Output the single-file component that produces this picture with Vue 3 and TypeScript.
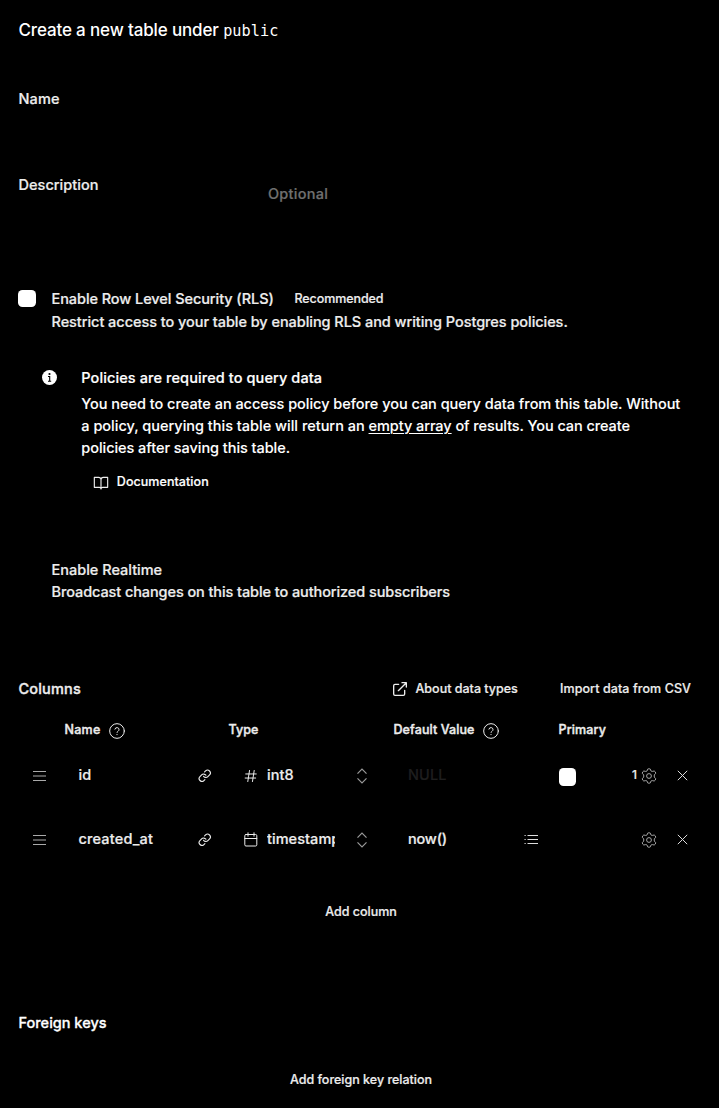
<script setup lang="ts">
import { ref } from 'vue'

interface ColumnRow {
  name: string
  kind: 'number' | 'date'
  type: string
  value: string
  suggestions: boolean
  primary: boolean
  count: string
}

const columns = ref<ColumnRow[]>([
  { name: 'id', kind: 'number', type: 'int8', value: '', suggestions: false, primary: true, count: '1' },
  { name: 'created_at', kind: 'date', type: 'timestamptz', value: 'now()', suggestions: true, primary: false, count: '' },
])
</script>

<template>
  <main class="panel">
    <h1 class="title"><span>Create a new table under</span><code>public</code></h1>

    <section class="field name-field"><label>Name</label></section>
    <section class="field desc-field">
      <label>Description</label>
      <span class="placeholder">Optional</span>
    </section>

    <section class="option rls">
      <span class="check"></span>
      <div class="option-body">
        <div class="option-head"><span class="rls-label">Enable Row Level Security (RLS)</span><span class="tag">Recommended</span></div>
        <p class="rls-text">Restrict access to your table by enabling RLS and writing Postgres policies.</p>
      </div>
    </section>

    <section class="notice">
      <svg class="info" viewBox="0 0 15 15" width="15" height="15"><circle cx="7.5" cy="7.5" r="7.5" fill="#fff" /><circle cx="7.5" cy="4" r="1.1" fill="#000" /><path d="M6 6.500h1.700v4.800M6 11.300h3.200" fill="none" stroke="#000" stroke-width="1.100" /></svg>
      <div>
        <h2>Policies are required to query data</h2>
        <p><span class="n1">You need to create an access policy before you can query data from this table. Without</span><br><span class="n2">a policy, querying this table will return an </span><u>empty array</u><span class="n3"> of results. You can create</span><br><span class="n4">policies after saving this table.</span></p>
        <div class="docs">
          <svg class="ic" viewBox="0 0 24 24" width="16" height="16" stroke-width="1.7"><path d="M2 3.500h6.500a3.500 3.500 0 0 1 3.500 3.500v14a2.500 2.500 0 0 0-2.500-2.500H2zM22 3.500h-6.500a3.500 3.500 0 0 0-3.500 3.500v14a2.500 2.500 0 0 1 2.500-2.500h7.500z" /></svg>
          <span>Documentation</span>
        </div>
      </div>
    </section>

    <section class="realtime">
      <div>Enable Realtime</div>
      <p>Broadcast changes on this table to authorized subscribers</p>
    </section>

    <header class="columns-head">
      <h2>Columns</h2>
      <svg class="ic" viewBox="0 0 24 24" width="16" height="16" stroke-width="2"><path d="M10 5H4.500a2 2 0 0 0-2 2v12.500a2 2 0 0 0 2 2H17a2 2 0 0 0 2-2V14M15 2.500h6.500v6.500M9.500 14.500 21.500 2.500" /></svg>
      <span class="about">About data types</span>
      <span class="import">Import data from CSV</span>
    </header>

    <div class="labels">
      <span class="l-name">Name</span>
      <svg class="ic help h1" viewBox="0 0 24 24" width="16" height="16" stroke-width="1.5"><circle cx="12" cy="12" r="11" /><path d="M8.900 9.200a3.100 3.100 0 0 1 6.100.9c0 2-3 2.700-3 3.900M12 17.200v.3" /></svg>
      <span class="l-type">Type</span>
      <span class="l-def">Default Value</span>
      <svg class="ic help h2" viewBox="0 0 24 24" width="16" height="16" stroke-width="1.5"><circle cx="12" cy="12" r="11" /><path d="M8.900 9.200a3.100 3.100 0 0 1 6.100.9c0 2-3 2.700-3 3.900M12 17.200v.3" /></svg>
      <span class="l-pri">Primary</span>
    </div>

    <div v-for="c in columns" :key="c.name" class="row">
      <svg class="handle" viewBox="0 0 13 12" width="13" height="12"><path d="M0 1.500h13M0 6h13M0 10.500h13" fill="none" stroke="#aaa" stroke-width="1" /></svg>
      <span class="c-name" :class="c.kind">{{ c.name }}</span>
      <svg class="ic" viewBox="0 0 24 24" width="13.500" height="13.500" stroke-width="2"><path d="M10 13a5 5 0 0 0 7.540.540l3-3a5 5 0 0 0-7.070-7.070l-1.720 1.710M14 11a5 5 0 0 0-7.540-.540l-3 3a5 5 0 0 0 7.070 7.070l1.710-1.710" /></svg>
      <span class="kind">
        <svg v-if="c.kind === 'number'" class="ic" viewBox="0 0 24 24" width="14" height="14" stroke-width="1.700"><path d="M3 8.500h18M2 15.500h18M9.500 2.500l-3 19M17.500 2.500l-3 19" /></svg>
        <svg v-else class="ic" viewBox="0 0 14 15" width="14" height="15" stroke-width="1"><rect x=".8" y="2.500" width="12" height="11.500" rx="1.200" /><path d="M.8 6.500h12M4 .8v3.400M10 .8v3.400" /></svg>
      </span>
      <span class="c-type" :class="c.kind">{{ c.type }}</span>
      <svg class="chev" viewBox="0 0 12 16" width="12" height="16"><path d="M1.500 5.700 6 1.200l4.500 4.500M1.500 10.300 6 14.800l4.500-4.500" fill="none" stroke="#999" stroke-width="1.200" /></svg>
      <span class="c-val" :class="{ empty: !c.value }">{{ c.value || 'NULL' }}</span>
      <span class="sugg"><svg v-if="c.suggestions" viewBox="0 0 14 11" width="14" height="11"><path d="M3.500 1.500H14M3.500 5.500H14M3.500 9.500H14M.5 1.500h1.200M.5 5.500h1.200M.5 9.500h1.200" fill="none" stroke="#ddd" stroke-width="1" /></svg></span>
      <span class="pri"><i v-if="c.primary" class="check small"></i></span>
      <span class="count">{{ c.count }}</span>
      <svg class="gear" viewBox="0 0 16 16" width="16" height="16"><path d="M6.600 1.200Q8 .2 9.400 1.200L10 3Q10.600 3.500 11.300 3.400L13.200 3Q14.800 3.800 14.700 5.300L13.400 6.800Q13 8 13.400 9.200L14.700 10.700Q14.800 12.200 13.200 13L11.300 12.600Q10.600 12.500 10 13L9.400 14.800Q8 15.800 6.600 14.800L6 13Q5.400 12.500 4.700 12.600L2.800 13Q1.200 12.200 1.300 10.700L2.600 9.200Q3 8 2.600 6.800L1.300 5.300Q1.200 3.800 2.800 3L4.700 3.400Q5.400 3.500 6 3Z" /><circle cx="8" cy="8" r="2.400" /></svg>
      <svg class="close" viewBox="0 0 11 11" width="11" height="11"><path d="M.8.8l9.400 9.400M10.200.8L.8 10.200" fill="none" stroke="#ddd" stroke-width="1" /></svg>
    </div>

    <div class="add add-col">Add column</div>
    <h2 class="fk">Foreign keys</h2>
    <div class="add add-fk">Add foreign key relation</div>
  </main>
</template>

<style>
body { background: #000; }
</style>

<style scoped>
.panel { box-sizing: border-box; width: 719px; height: 1108px; overflow: hidden; padding-top: 18px; background: #000; color: #ededed; font: 500 14.5px/22px Inter, "Liberation Sans", sans-serif; -webkit-text-stroke: .2px currentColor; }
h1, h2, p { margin: 0; font: inherit; }
svg { display: block; flex: none; }
span { white-space: pre; }
.ic { fill: none; stroke: #ededed; stroke-linecap: round; stroke-linejoin: round; }

.title { display: flex; align-items: baseline; height: 24px; padding-left: 18.500px; font-size: 17px; line-height: 24px; letter-spacing: -.15px; color: #fff; -webkit-text-stroke: 0; }
.title code { margin-left: 4.500px; font: 15.2px/24px "DejaVu Sans Mono", monospace; letter-spacing: .05px; }

.field { display: flex; padding-left: 18.500px; }
.name-field { margin-top: 46px; height: 22px; }
.desc-field { margin-top: 64px; height: 32px; }
.field label { width: 249.500px; letter-spacing: .03px; }
.name-field label { letter-spacing: .15px; }
.placeholder { padding-top: 9px; color: #707070; letter-spacing: .25px; }

.option { display: flex; margin-top: 82px; padding-left: 18px; }
.check { display: block; flex: none; width: 18px; height: 17px; margin-top: 2px; border-radius: 4.500px; background: #fff; }
.option-body { margin-left: 15.500px; }
.option-head { display: flex; height: 23px; }
.rls-label { width: 243px; letter-spacing: -.07px; }
.tag { font-size: 12.5px; letter-spacing: -.08px; }
.rls-text { letter-spacing: -.05px; }

.notice { display: flex; margin-top: 34px; padding-left: 42px; color: #fff; }
.info { margin: 3px 24.300px 0 0; }
.notice h2 { height: 26px; letter-spacing: .1px; }
.notice p { white-space: nowrap; -webkit-text-stroke: .1px currentColor; }
.n1 { letter-spacing: -.03px; }
.n2 { letter-spacing: -.005px; }
.notice u { letter-spacing: -.06px; text-underline-offset: 2px; text-decoration-thickness: 1px; }
.n3 { letter-spacing: -.08px; }
.n4 { letter-spacing: -.05px; }
.docs { display: flex; align-items: center; gap: 8px; height: 22px; margin-top: 12px; padding-left: 11.500px; font-size: 12.5px; letter-spacing: .06px; }
.docs .ic { position: relative; top: .5px; }

.realtime { margin-top: 66px; padding-left: 51.500px; }
.realtime p { letter-spacing: -.09px; }

.columns-head { display: flex; align-items: center; height: 22px; margin-top: 75px; padding-left: 18.500px; font-size: 12.5px; }
.columns-head h2 { width: 373px; font-size: 14.5px; letter-spacing: .17px; -webkit-text-stroke-width: .35px; }
.about { width: 144.500px; margin-left: 8px; }
.import { letter-spacing: .08px; }

.labels { display: flex; align-items: center; height: 20px; margin-top: 20px; padding-left: 64.500px; font-size: 12.5px; -webkit-text-stroke-width: .4px; }
.l-name { width: 44.500px; letter-spacing: .25px; }
.help { position: relative; top: 1px; }
.h1 { margin-right: 103.500px; }
.l-type { width: 165px; letter-spacing: .1px; }
.l-def { width: 89.500px; letter-spacing: .1px; }
.h2 { margin-right: 59.500px; }
.l-pri { letter-spacing: .13px; }

.row { display: grid; grid-template-columns: 45px 120px 46px 23px 68px 52px 137px 35px 73px 9px 36px 11px; align-items: center; height: 64px; margin-top: 3px; padding-left: 33px; }
.row + .row { margin-top: 0; }
.handle { margin-top: 1px; }
.row > .ic { margin-top: 1px; }
.kind { display: flex; margin-top: 1px; }
.c-name { padding-left: .5px; }
.c-name.number { letter-spacing: .1px; }
.c-name.date { letter-spacing: .17px; }
.c-type { overflow: hidden; letter-spacing: .1px; }
.c-type.date { letter-spacing: .05px; }
.chev { margin: 1px 0 0 21px; }
.c-val { padding-left: 21px; letter-spacing: -.19px; }
.c-val.empty { color: #1e1e1e; letter-spacing: .1px; }
.check.small { width: 17px; height: 18px; margin-top: 3px; }
.count { font-size: 12px; }
.gear { margin-top: 1px; fill: none; stroke: #b5b5b5; stroke-width: .9; }
.close { margin-top: 1px; }

.add { height: 22px; padding-left: 3px; text-align: center; font-size: 12.5px; }
.add-col { margin-top: 30px; }
.fk { margin-top: 89px; padding-left: 18.500px; color: #fff; -webkit-text-stroke-width: .3px; }
.add-fk { margin-top: 35px; }
</style>
